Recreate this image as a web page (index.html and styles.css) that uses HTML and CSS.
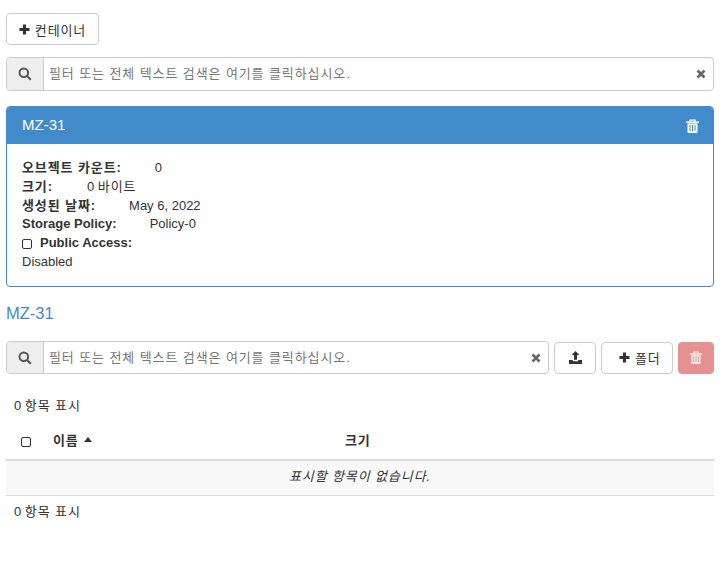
FILE: index.html
```html
<!DOCTYPE html>
<html lang="ko">
<head>
    <meta charset="UTF-8">
    <meta name="viewport" content="width=device-width, initial-scale=1.0">
    <title>컨테이너</title>
    <link rel="stylesheet" href="styles.css">
</head>
<body>
    <div class="toolbar">
        <button class="btn">
            <svg class="icon" viewBox="0 0 12 12"><path d="M4.300 .5h3.400v3.800h3.800v3.400h-3.800v3.800h-3.400v-3.800h-3.800v-3.400h3.800z"/></svg>
            <span class="ko">컨테이너</span>
        </button>
    </div>

    <div class="search search-top">
        <span class="search-addon">
            <svg class="icon-search" viewBox="0 0 14 14"><circle cx="5.800" cy="5.800" r="4.300"/><path d="M9 9l3.800 3.800"/></svg>
        </span>
        <span class="search-text ko">필터 또는 전체 텍스트 검색은 여기를 클릭하십시오.</span>
        <span class="search-clear">
            <svg viewBox="0 0 10 10"><path d="M1.500 1.500l7 7M8.500 1.500l-7 7"/></svg>
        </span>
    </div>

    <div class="panel">
        <div class="panel-heading">
            <span>MZ-31</span>
            <svg class="icon-trash" viewBox="0 0 13 14"><path d="M0 2.500h13v1.500H0zM3.300 2.500V.6h6.400v1.900H8.500V1.700h-4v.8zM1.500 4.500h10V13a1 1 0 0 1-1 1h-8a1 1 0 0 1-1-1zM3.500 6v6h1V6zm2.500 0v6h1V6zm2.500 0v6h1V6z" fill-rule="evenodd"/></svg>
        </div>
        <div class="panel-body">
            <div class="info-row"><b class="info-label ko">오브젝트 카운트:</b><span>0</span></div>
            <div class="info-row"><b class="info-label size-label ko">크기:</b><span>0 <span class="ko">바이트</span></span></div>
            <div class="info-row"><b class="info-label ko">생성된 날짜:</b><span>May 6, 2022</span></div>
            <div class="info-row"><b class="info-label">Storage Policy:</b><span>Policy-0</span></div>
            <div class="info-row"><span class="checkbox"></span><b>Public Access:</b></div>
            <div class="info-row">Disabled</div>
        </div>
    </div>

    <a href="#" class="container-link">MZ-31</a>

    <div class="object-bar">
        <div class="search">
            <span class="search-addon">
                <svg class="icon-search" viewBox="0 0 14 14"><circle cx="5.800" cy="5.800" r="4.300"/><path d="M9 9l3.800 3.800"/></svg>
            </span>
            <span class="search-text ko">필터 또는 전체 텍스트 검색은 여기를 클릭하십시오.</span>
            <span class="search-clear">
                <svg viewBox="0 0 10 10"><path d="M1.500 1.500l7 7M8.500 1.500l-7 7"/></svg>
            </span>
        </div>
        <button class="btn btn-upload">
            <svg class="icon icon-upload" viewBox="0 0 13 13"><path d="M6.500 0l3.800 4H8v4.800H5V4H2.700zM0 9h3.800v1.300h5.400V9H13v4H0z"/></svg>
        </button>
        <button class="btn btn-folder">
            <svg class="icon" viewBox="0 0 12 12"><path d="M4.300 .5h3.400v3.800h3.800v3.400h-3.800v3.800h-3.400v-3.800h-3.800v-3.400h3.800z"/></svg>
            <span class="ko">폴더</span>
        </button>
        <button class="btn btn-delete">
            <svg class="icon-trash" viewBox="0 0 13 14"><path d="M0 2.500h13v1.500H0zM3.300 2.500V.6h6.400v1.900H8.500V1.700h-4v.8zM1.500 4.500h10V13a1 1 0 0 1-1 1h-8a1 1 0 0 1-1-1zM3.500 6v6h1V6zm2.500 0v6h1V6zm2.500 0v6h1V6z" fill-rule="evenodd"/></svg>
        </button>
    </div>

    <div class="item-count count-top">0 <span class="ko">항목 표시</span></div>

    <table class="items">
        <thead>
            <tr>
                <th class="col-check"><span class="checkbox"></span></th>
                <th class="col-name"><span class="ko">이름</span> <span class="sort-up"></span></th>
                <th><span class="ko">크기</span></th>
            </tr>
        </thead>
        <tbody>
            <tr>
                <td colspan="3" class="empty ko">표시할 항목이 없습니다.</td>
            </tr>
        </tbody>
    </table>

    <div class="item-count">0 <span class="ko">항목 표시</span></div>
</body>
</html>
```

FILE: styles.css
```css
* {
    box-sizing: border-box;
}
body {
    margin: 0;
    padding: 13px 9px 0 6px;
    font-family: "Liberation Sans", "Noto Sans CJK KR", sans-serif;
    font-size: 13px;
    line-height: 18.7px;
    color: #333333;
    background-color: #ffffff;
}
.ko {
    letter-spacing: 0.9px;
}
.btn {
    display: inline-flex;
    align-items: center;
    justify-content: center;
    gap: 5px;
    height: 32px;
    padding: 0 12px;
    border: 1px solid #cccccc;
    border-radius: 4px;
    background-color: #ffffff;
    color: #333333;
    font-family: inherit;
    font-size: 13px;
    white-space: nowrap;
}
.toolbar .btn {
    width: 93px;
}
.icon {
    width: 11px;
    height: 11px;
    fill: #333333;
    flex: none;
}
.icon-upload {
    width: 13px;
    height: 13px;
}
.icon-trash {
    width: 13px;
    height: 14px;
    fill: #ffffff;
}
.search {
    display: flex;
    flex: 1;
    height: 33px;
    border: 1px solid #cccccc;
    border-radius: 4px;
    background-color: #ffffff;
}
.search-top {
    height: 34px;
    margin-top: 12px;
}
.search-addon {
    display: flex;
    align-items: center;
    justify-content: center;
    width: 37px;
    background-color: #eeeeee;
    border-right: 1px solid #cccccc;
    border-radius: 3px 0 0 3px;
}
.icon-search {
    width: 14px;
    height: 14px;
    fill: none;
    stroke: #555555;
    stroke-width: 2;
}
.search-text {
    flex: 1;
    padding-left: 5px;
    line-height: 31px;
    color: #777777;
}
.search-clear {
    display: flex;
    align-items: center;
    padding-right: 7px;
}
.search-clear svg {
    width: 10px;
    height: 10px;
    fill: none;
    stroke: #666666;
    stroke-width: 2.600;
}
.panel {
    height: 181px;
    margin-top: 15px;
    border: 1px solid #428bca;
    border-radius: 4px;
}
.panel-heading {
    display: flex;
    align-items: center;
    justify-content: space-between;
    height: 37px;
    padding: 0 14px 0 15px;
    background-color: #428bca;
    color: #ffffff;
    font-size: 15px;
    border-radius: 3px 3px 0 0;
}
.panel-body {
    padding: 15px 15px 0 15px;
}
.info-row {
    display: flex;
    align-items: center;
    height: 18.8px;
}
.info-label {
    margin-right: 33px;
}
.size-label {
    margin-right: 34px;
}
.checkbox {
    display: inline-block;
    width: 10px;
    height: 10px;
    margin-right: 8px;
    border: 1px solid #333333;
    border-radius: 2px;
    background-color: #ffffff;
}
.container-link {
    display: block;
    margin-top: 16px;
    color: #428bca;
    font-size: 16.5px;
    line-height: 20px;
    text-decoration: none;
}
.object-bar {
    display: flex;
    align-items: center;
    gap: 5px;
    margin-top: 18px;
}
.btn-upload {
    width: 42px;
    padding: 0;
}
.btn-folder {
    width: 72px;
    padding-left: 17px;
    justify-content: flex-start;
}
.btn-delete {
    width: 36px;
    padding: 0;
    border-color: #e59190;
    background-color: #e59190;
}
.btn-delete .icon-trash {
    width: 12px;
    height: 13px;
    opacity: 0.8;
}
.item-count {
    padding-left: 8px;
    margin-top: 7px;
}
.count-top {
    margin-top: 23px;
}
.items {
    width: 100%;
    margin-top: 8px;
    border-collapse: collapse;
}
.items th {
    height: 36px;
    padding: 0 8px;
    text-align: left;
    border-bottom: 2px solid #dddddd;
}
.items .col-check {
    width: 39px;
    padding: 2px 0 0 15px;
}
.items .col-check .checkbox {
    display: block;
    margin: 0;
}
.items .col-name {
    width: 292px;
}
.sort-up {
    display: inline-block;
    margin-left: 2px;
    vertical-align: 3px;
    border-left: 4.500px solid transparent;
    border-right: 4.500px solid transparent;
    border-bottom: 5px solid #333333;
}
.empty {
    height: 36px;
    padding-bottom: 3px;
    text-align: center;
    font-style: italic;
    background-color: #f9f9f9;
    border-bottom: 1px solid #dddddd;
}
```
